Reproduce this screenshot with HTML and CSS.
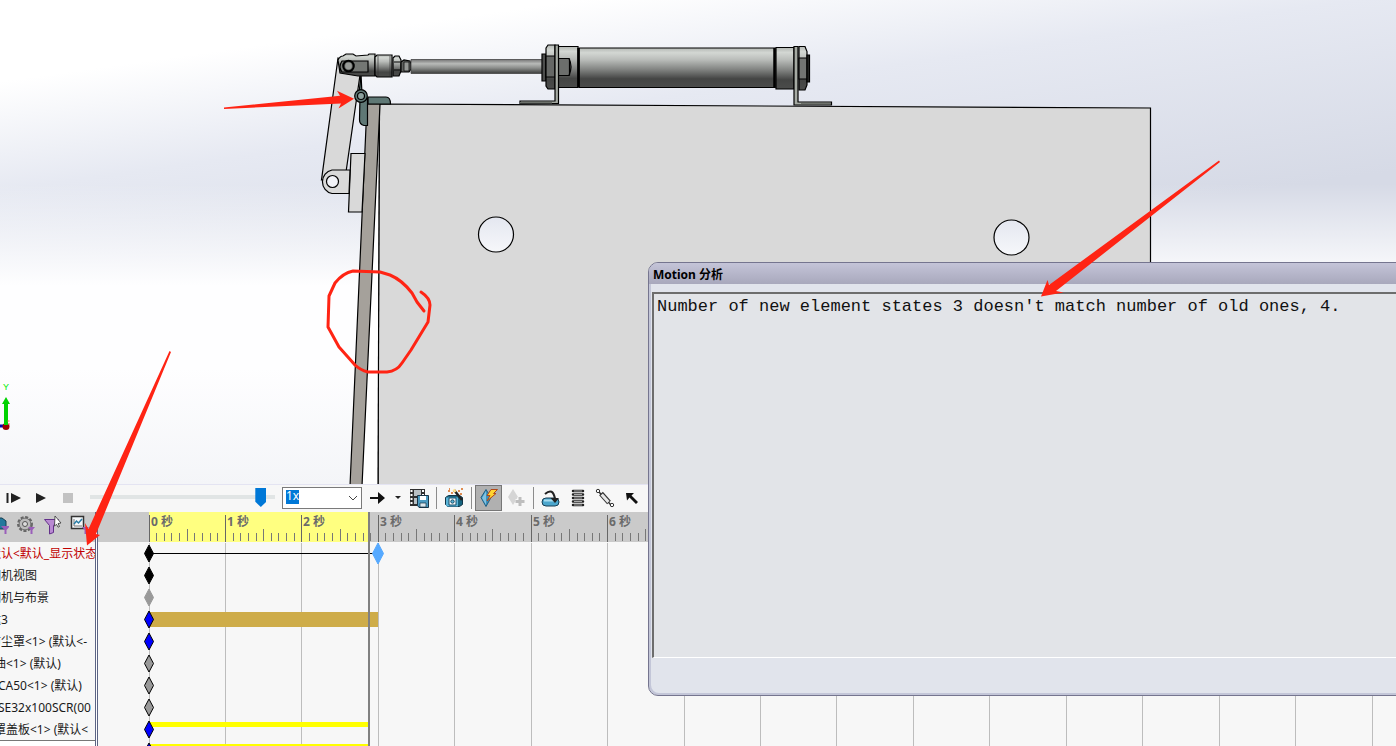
FILE: index.html
```html
<!DOCTYPE html>
<html lang="zh-CN">
<head>
<meta charset="utf-8">
<title>Motion 分析</title>
<link rel="stylesheet" href="styles.css">
</head>
<body>
<main class="app">
  <section class="viewport" aria-label="模型视图">
    <svg class="model" aria-hidden="true">
      <defs>
        <linearGradient id="steel" x1="0" y1="0" x2="0" y2="1">
          <stop offset="0" stop-color="#b4b8b4"/><stop offset=".12" stop-color="#d3d7d3"/>
          <stop offset=".3" stop-color="#b9bcb9"/><stop offset=".55" stop-color="#808280"/>
          <stop offset=".78" stop-color="#444544"/><stop offset="1" stop-color="#4b4c4b"/>
        </linearGradient>
        <linearGradient id="rod" x1="0" y1="0" x2="0" y2="1">
          <stop offset="0" stop-color="#777"/><stop offset=".3" stop-color="#b8bab8"/>
          <stop offset=".6" stop-color="#8c8e8c"/><stop offset="1" stop-color="#3c3d3c"/>
        </linearGradient>
        <linearGradient id="hole" x1="0" y1="0" x2="0" y2="1">
          <stop offset="0" stop-color="#e4e7f0"/><stop offset="1" stop-color="#f6f7fa"/>
        </linearGradient>
      </defs>
      <g stroke="#000" stroke-width="1.2">
        <path d="M379 104L1150.500 108V486H378Z" fill="#d9d9d9"/>
        <circle cx="496" cy="234.500" r="17.500" fill="url(#hole)"/>
        <circle cx="1011.500" cy="237.500" r="17.500" fill="url(#hole)"/>
        <path d="M379 105L378 486H362Z" fill="#fff" stroke="none"/>
        <path d="M379.500 104L378 486" fill="none"/>
        <path d="M367 104H380L362 486H350Z" fill="#a5a19b"/>
        <path d="M351 153.500H365L362 212H348.500Z" fill="#d9d9d9"/>
        <path d="M361 74l-2 20h3z" fill="#5c7672"/>
        <path d="M338 58L361 68L346 172L321.500 180Z" fill="#d9d9d9"/>
        <path d="M350 170H332a12 12 0 0 0 0 23.500H349Z" fill="#d9d9d9"/>
        <circle cx="332.500" cy="181.500" r="6" fill="#f2f3f8"/>
        <path d="M368 97H386q4.500 0 4.500 7H368Z" fill="#5f7875"/>
        <path d="M360 97L367.500 98V125.500H364q-4.500-1-4.500-6Z" fill="#5f7875"/>
        <circle cx="361" cy="96" r="6.300" fill="#5f7875"/>
        <circle cx="361" cy="96" r="3.500" fill="#8ca19e"/>
        <path d="M338 60q2-4 5-4l3-2h7l3 2 12-1 1-1h6V76H358L340 73Z" fill="url(#steel)"/>
        <path d="M342 61H368V72H342q-4-5 0-11Z" fill="#747774"/>
        <circle cx="348.500" cy="66" r="5.300" fill="#575957" stroke-width="2"/>
        <circle cx="348.500" cy="66" r="3.400" fill="#989b98" stroke="none"/>
        <path d="M375 57l2-2H392V77H377l-2-2Z" fill="url(#steel)"/>
        <path d="M378 56V76M390 56V76" stroke="#333" stroke-width=".7" fill="none"/>
        <path d="M393 58l2-2H399l2 4V71l-2 5H393Z" fill="url(#steel)"/>
        <path d="M394 62H400M394 70H400" fill="none"/>
        <path d="M401 62l3-2 6 1 1 3v5l-2 3H401Z" fill="#606260"/>
        <path d="M404 62V71H409V62Z" fill="#969896" stroke-width=".7"/>
        <path d="M411 59.500H543V73.500H411Z" fill="url(#rod)" stroke="#444" stroke-width=".8"/>
        <path d="M542 54H546V81H542Z" fill="#4c4d4c"/>
        <path d="M546 48l2-3H555V89H548l-2-3Z" fill="url(#steel)"/>
        <path d="M546 56H555V77H546Z" fill="#656765"/>
        <path d="M558 46.500H578V87.500H558Z" fill="url(#steel)"/>
        <path d="M558 58.500H569q4 8 0 17H558Z" fill="#6c6e6c"/>
        <path d="M569.500 58.500V75.500" fill="none"/>
        <path d="M579 48H775V87.500H579Z" fill="url(#steel)"/>
        <path d="M578.500 48V87M774.500 48V88" stroke-width="2.500"/>
        <path d="M776 47.500H794V89H776Z" fill="url(#steel)"/>
        <path d="M799 46.500H805l2 5V85l-2 5H799Z" fill="url(#steel)"/>
        <path d="M799 58H807V79H799Z" fill="#737573"/>
        <path d="M807 55H809.500V82H807Z" fill="#252625"/>
        <path d="M555 45H558.500V103.500H520V101H555Z" fill="#a5aaa3"/>
        <path d="M794 46.500H798V102H831.500V105H794Z" fill="#a5aaa3"/>
        <path d="M520 102H552V103.500H520ZM801 103H831V104H801Z" fill="#6d716c" stroke="none"/>
      </g>
      <path d="M0 426H6" stroke="#0000b4" stroke-width="3"/>
      <circle cx="6" cy="426.500" r="3.500" fill="#900"/>
      <path d="M4 425V404H2L6 397L10 404H8V425Z" fill="#00d200"/>
      <path d="M7.500 421h2M8 424h2" stroke="#f66"/>
      <text class="axis" x="3" y="390">Y</text>
    </svg>
  </section>

  <div class="toolbar" role="toolbar" aria-label="动画控制">
    <button class="tool" aria-label="从头播放"><svg width="16" height="16"><path d="M1.500 3v10" stroke="#222" stroke-width="2"/><path d="M5 3l10 5-10 5z" fill="#222"/></svg></button>
    <button class="tool" aria-label="播放"><svg width="16" height="16"><path d="M3 3l10 5-10 5z" fill="#222"/></svg></button>
    <button class="tool" aria-label="停止"><svg width="16" height="16"><path d="M3 3h10v10H3z" fill="#c2c2c2"/></svg></button>
    <input class="seek" type="range" min="0" max="100" value="95" aria-label="播放位置">
    <span class="speed">
      <select class="speed-select" aria-label="播放速度"><option>1x</option><option>2x</option></select>
      <svg class="speed-chevron" width="10" height="6" aria-hidden="true"><path d="M1 1l4 4 4-4" fill="none" stroke="#444"/></svg>
    </span>
    <button class="tool" aria-label="播放模式"><svg width="16" height="16"><path d="M0 7h8V2l7 6-7 6V9H0z" fill="#111"/></svg></button>
    <button class="tool tool-narrow" aria-label="播放模式选项"><svg width="6" height="4"><path d="M0 0h6L3 3z" fill="#222"/></svg></button>
    <button class="tool" aria-label="保存动画"><svg width="20" height="20"><path d="M1 1h15v17H1z" fill="#303030"/><path d="M2.500 2v16" stroke="#fff" stroke-width="2" stroke-dasharray="2 2"/><path d="M14 2v6" stroke="#fff" stroke-width="2" stroke-dasharray="2 2"/><path d="M5 2h7v6H5zM5 10h7v6H5z" fill="#b9c0c4"/><path d="M8.500 7.500h11v12H10l-1.500-2z" fill="#4b9bc2" stroke="#183548"/><path d="M11 8h6v4h-6z" fill="#fff"/><path d="M11 15h6v4h-6z" fill="#dbe8ee" stroke="#183548" stroke-width=".7"/></svg></button>
    <span class="sep"></span>
    <button class="tool" aria-label="动画向导"><svg width="20" height="20"><path d="M1.500 9.500l3-2h11l3 2v7l-3 2h-12l-2-2z" fill="#16647f" stroke="#123547"/><path d="M2 9.500h12v9H3l-1-1z" fill="#5ab4d8"/><path d="M5 10h7v7H5z" fill="#fff" stroke="#174b64"/><circle cx="8.500" cy="13.500" r="1.700" fill="#5ab4d8" stroke="#174b64"/><path d="M10 2l8 10" stroke="#222" stroke-width="2.500"/><path d="M9.500 1.500l2 2.500" stroke="#ffe28a" stroke-width="2.500"/><path d="M4 3h2M7 5h2M14 3h2M17 1h2M16 6h2M5 1h1" stroke="#d8691d" stroke-width="1.500"/></svg></button>
    <span class="sep"></span>
    <button class="tool tool-on" aria-label="自动键码" aria-pressed="true"><svg width="20" height="20"><path d="M7 1.500l5 8-5 9-5-9z" fill="#3c91be" stroke="#1d5d82"/><path d="M7 3v14L3 10z" fill="#7fc2e2"/><path d="M12 1.500h6.500l-4 4H17L8 13l3-5.500H8z" fill="#ffd531" stroke="#b1481a"/></svg></button>
    <button class="tool" aria-label="添加/更新键码" disabled><svg width="20" height="20"><path d="M7 1l5 8-5 8-5-8z" fill="#d5d5d5"/><path d="M14 9v9M9.500 13.500h9" stroke="#f8f8f8" stroke-width="5"/><path d="M14 9v9M9.500 13.500h9" stroke="#bebebe" stroke-width="3"/></svg></button>
    <span class="sep"></span>
    <button class="tool" aria-label="马达"><svg width="20" height="20"><rect x="1" y="10" width="17" height="8" rx="4" fill="#4ba6cd" stroke="#173f55"/><path d="M3 12.500h11" stroke="#a7dcf0" stroke-width="2"/><path d="M4 6q8-7 10 5" fill="none" stroke="#222" stroke-width="2"/><path d="M9.500 10h8.500L14 15z" fill="#222"/></svg></button>
    <button class="tool" aria-label="弹簧"><svg width="16" height="18"><path d="M3 2h10M3 5.500h10M3 9h10M3 12.500h10M3 16h10" stroke="#222" stroke-width="2.500" stroke-linecap="round"/><path d="M4 2h8M4 5.500h8M4 9h8M4 12.500h8M4 16h8" stroke="#ccc" stroke-width=".8"/></svg></button>
    <button class="tool" aria-label="阻尼"><svg width="20" height="20"><circle cx="3" cy="3" r="1.700" fill="none" stroke="#333"/><path d="M4 4l12 13" stroke="#333" stroke-width="1.500"/><path d="M6 5.500l8 9" stroke="#333" stroke-width="5"/><path d="M6.700 6.500l6.700 7.500" stroke="#e8e8e8" stroke-width="3"/><circle cx="17" cy="17" r="1.700" fill="#fff" stroke="#333"/></svg></button>
    <button class="tool" aria-label="选择"><svg width="14" height="14"><path d="M1 2h8L6.500 4.500 13 11l-2 2-6.500-6.500L2 9.500z" fill="#111"/></svg></button>
  </div>

  <section class="motion">
    <div class="tree">
      <div class="tree-tools">
        <button class="tool" aria-label="过滤动画"><svg width="20" height="20"><path d="M7 3h6l4 3v8H6z" fill="#24799d" stroke="#163e50"/><path d="M12 11h9l-3.500 4v4h-2v-4z" fill="#9a5fba"/></svg></button>
        <button class="tool" aria-label="过滤驱动"><svg width="20" height="20"><circle cx="9" cy="9" r="6.700" fill="#b8b8b8" stroke="#666" stroke-width="2.500" stroke-dasharray="3 1.500"/><circle cx="9" cy="9" r="5.800" fill="#bbb" stroke="#777"/><circle cx="9" cy="9" r="2.500" fill="#ddd" stroke="#555"/><path d="M12 12h7l-2.500 3v4h-2v-4z" fill="#9a5fba"/></svg></button>
        <button class="tool" aria-label="过滤所选"><svg width="20" height="20"><path d="M1.500 4.500h14l-5 6v7l-4 1.500v-8.500z" fill="#b98ad2" stroke="#63308a"/><path d="M12 1l6 7-3 .5 1.500 3-1.500.7-1.500-3-2 2z" fill="#fff" stroke="#333" stroke-width=".8"/></svg></button>
        <button class="tool" aria-label="过滤结果"><svg width="20" height="20"><path d="M1.500 1.500h12v12h-12z" fill="#f5f8fa" stroke="#333" stroke-width="1.500"/><path d="M4 4v7h8" fill="none" stroke="#777"/><path d="M4 9l2.500-3 2 2L12 4" fill="none" stroke="#2b7da5" stroke-width="1.500"/><path d="M12 12h7l-2.500 3v4h-2v-4z" fill="#9a5fba"/></svg></button>
      </div>
      <ul class="tree-list">
        <li class="row row-alert">默认&lt;默认_显示状态</li>
        <li class="row">相机视图</li>
        <li class="row">相机与布景</li>
        <li class="row">达3</li>
        <li class="row">防尘罩&lt;1&gt; (默认&lt;-</li>
        <li class="row row-part">油&lt;1&gt; (默认)</li>
        <li class="row row-code">CA50&lt;1&gt; (默认)</li>
        <li class="row row-code">SE32x100SCR(00</li>
        <li class="row row-part">罩盖板&lt;1&gt; (默认&lt;</li>
      </ul>
      <div class="tree-foot"></div>
    </div>
    <div class="splitter"></div>
    <div class="timeline">
      <svg class="timeline-canvas" id="timeline" role="img" aria-label="时间线"></svg>
    </div>
  </section>

  <section class="dialog" role="dialog" aria-labelledby="dialog-title">
    <h1 class="dialog-title" id="dialog-title">Motion 分析</h1>
    <textarea class="message" readonly wrap="off" aria-labelledby="dialog-title">Number of new element states 3 doesn't match number of old ones, 4.</textarea>
  </section>

  <svg class="marks" aria-hidden="true">
    <g fill="#ff2414">
      <path d="M224 107.500L340 95.800L337 90.700L354 98.700L338.500 108.500L341 103.500L224 109Z"/>
      <path d="M1219 160.500L1049 285L1047.500 280L1041 296.500L1063.500 292.500L1056 291L1220 162Z"/>
      <path d="M169.500 351L88.500 529L85 523L87 545.500L100 535L96 534L171 352Z"/>
    </g>
    <path d="M424 311L417 302L412 293Q402 280 390 275L380 272L353 271Q343 273 335 283L329 296L328 327L339 347L355 365Q360 370 368 372L387 372Q397 371 402 363L411 350L428 322L430 305Q430 298 421 292" fill="none" stroke="#ff2414" stroke-width="3" stroke-linecap="round" stroke-linejoin="round"/>
  </svg>
</main>
<script src="timeline.js"></script>
</body>
</html>
```

FILE: styles.css
```css
* { box-sizing: border-box; }

body {
  margin: 0;
  font-family: "Noto Sans", "Noto Sans CJK SC", sans-serif;
  font-size: 12px;
  color: #1a1a1a;
}

.app {
  position: relative;
  display: flex;
  flex-direction: column;
  height: 100vh;
  overflow: hidden;
}

/* Model view */
.viewport {
  flex: 1;
  min-height: 0;
  border-bottom: 1px solid #e4e4f2;
  background:
    linear-gradient(to bottom, rgba(254, 254, 255, 0) 38%, #fefeff 59%, #fefeff 76%, #f4f5f8 100%),
    linear-gradient(172deg, #fff 12%, #e6e9f2 28%, #d6dae6 54%);
}
.model { display: block; width: 100%; height: 100%; }
.axis { font: 9px "Liberation Sans", sans-serif; fill: #0e0; }

/* Playback toolbar */
.toolbar {
  display: flex;
  align-items: center;
  height: 27px;
  padding-bottom: 2px;
  background: #f7f7f7;
}
.tool {
  display: flex;
  flex: none;
  align-items: center;
  justify-content: center;
  width: 27px;
  height: 26px;
  padding: 0;
  border: 0;
  background: none;
}
.tool-narrow { width: 14px; }
.tool-on { border: 1px solid #777; background: #b0b0b0; }
.sep { width: 1px; height: 22px; margin: 0 3px 0 4px; background: #8c8c8c; }

.seek {
  appearance: none;
  width: 185px;
  height: 22px;
  margin: 0 7px 0 9px;
  background: linear-gradient(#e1e5e5, #e1e5e5) 0 8px / 100% 4px no-repeat;
}
.seek::-webkit-slider-thumb {
  appearance: none;
  width: 11px;
  height: 19px;
  background: #0078d7;
  clip-path: polygon(0 0, 100% 0, 100% 72%, 50% 100%, 0 72%);
}

.speed { position: relative; flex: none; width: 80px; margin-right: 2px; }
.speed-select {
  display: block;
  appearance: none;
  width: 100%;
  height: 22px;
  padding: 0 4px 4px 3px;
  border: 1px solid #7a7a7a;
  border-radius: 0;
  background: linear-gradient(#0078d7, #0078d7) 3px 2px / 13px 14px no-repeat #fff;
  color: #fff;
  font: 12px/16px "Noto Sans", sans-serif;
}
.speed-chevron { position: absolute; right: 4px; top: 8px; pointer-events: none; }

/* Motion study panel */
.motion { display: flex; height: 234px; background: #f7f7f7; }
.tree { display: flex; flex-direction: column; flex: none; width: 95px; overflow: hidden; }
.tree-tools {
  display: flex;
  flex: none;
  align-items: center;
  height: 30px;
  padding-bottom: 4px;
  margin-left: -15px;
  background: #cacaca;
}
.tree-list { margin: 0; padding: 0; list-style: none; }
.row { height: 22px; line-height: 24px; text-indent: -11px; white-space: nowrap; }
.row-alert { color: #c00000; }
.row-part { text-indent: -6px; }
.row-code { text-indent: -2px; }
.tree-foot { flex: 1; border-top: 1px solid #777; background: #fff; }
.splitter {
  flex: none;
  width: 3px;
  border: solid #5c6484;
  border-width: 0 1px;
  background: #fff;
}
.timeline { flex: 1; min-width: 0; }
.timeline-canvas { display: block; width: 100%; height: 100%; }
.second { font: bold 12px "Noto Sans", "Noto Sans CJK SC", sans-serif; fill: #6b6b6b; }

/* Analysis message window */
.dialog {
  position: absolute;
  top: 262px;
  right: -10px;
  bottom: 50px;
  left: 648px;
  display: flex;
  flex-direction: column;
  padding-bottom: 37px;
  border: 1px solid #75758f;
  border-radius: 10px;
  background: #e1e4ec;
  box-shadow: inset 1px -1px 0 1px #c3c6d8;
  overflow: hidden;
}
.dialog-title {
  flex: none;
  height: 21px;
  margin: 0 0 8px;
  padding: 3px 4px 0;
  background: linear-gradient(#c4c4d8, #a8a8bc);
  color: #000;
  font-size: 12px;
  line-height: 18px;
}
.message {
  flex: 1;
  margin-left: 3px;
  padding: 2px 3px;
  border: 2px solid;
  border-color: #6d6d6d #fff #fff #6d6d6d;
  border-bottom-width: 1px;
  border-radius: 0;
  background: #e2e4e8;
  color: #111;
  font: 17px/22px "Liberation Mono", monospace;
  resize: none;
  outline: 0;
  overflow: hidden;
}

/* Red markup */
.marks {
  position: absolute;
  inset: 0;
  width: 100%;
  height: 100%;
  pointer-events: none;
}
```

FILE: timeline.js
```js
const canvas = document.getElementById('timeline');
const START = 51;
const SECOND = 76.44;
const RULER = 30;
const LABEL_WIDTH = 34;
const parts = [];

const rect = (x, y, w, h, fill) =>
  parts.push(`<rect x="${x}" y="${y}" width="${w}" height="${h}" fill="${fill}"/>`);

const width = canvas.getBoundingClientRect().width;

rect(0, 0, '100%', RULER, '#cacaca');
rect(START, 0, 219, RULER, '#ffff80');

for (let s = 0; START + s * SECOND < width; s++) {
  const x = Math.floor(START + s * SECOND);
  rect(x, RULER + 1, 1, '100%', '#bdbdbd');
  rect(x, 3, 1, 27, '#666');
  for (let t = 1; t < 10; t++) {
    const h = t === 5 ? 12 : 8;
    rect(Math.floor(START + (s + t / 10) * SECOND), 29 - h, 1, h, '#777');
  }
  if (x + LABEL_WIDTH < width) {
    parts.push(`<text class="second" x="${x + 2}" y="14">${s} 秒</text>`);
  }
}

rect(START, 41, 229, 1, '#000');
rect(START, 100, 229, 15, '#ceac49');
rect(START, 210, 219, 5, '#ff0');
rect(START, 232, 219, 2, '#ff0');
rect(270, 0, 2, '100%', '#808080');

const key = (x, y, w, h, fill, stroke) =>
  parts.push(`<path d="M${x} ${y - h}L${x + w} ${y}L${x} ${y + h}L${x - w} ${y}Z" fill="${fill}" stroke="${stroke}"/>`);

['#000', '#000', '#999', '#00f', '#00f', '#999', '#999', '#999', '#00f', '#00f'].forEach((fill, i) =>
  key(START, 41.5 + i * 22, 4.5, 8.5, fill, i === 2 ? '#999' : '#000'));
key(280, 41.5, 5.5, 10.5, '#55a9ff', '#55a9ff');

canvas.innerHTML = parts.join('');
```
